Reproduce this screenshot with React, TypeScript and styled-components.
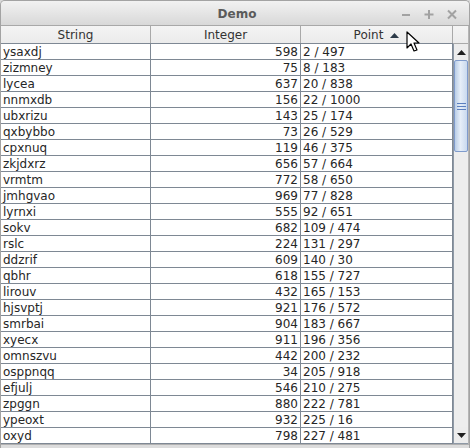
import React from "react";
import styled, { createGlobalStyle } from "styled-components";

const Global = createGlobalStyle`
  html, body { margin: 0; padding: 0; width: 470px; height: 448px; overflow: hidden; background: #d9d9d9; }
  #root { width: 470px; height: 448px; }
  * { box-sizing: border-box; }
`;

const rows: [string, number, string][] = [
  ["ysaxdj", 598, "2 / 497"],
  ["zizmney", 75, "8 / 183"],
  ["lycea", 637, "20 / 838"],
  ["nnmxdb", 156, "22 / 1000"],
  ["ubxrizu", 143, "25 / 174"],
  ["qxbybbo", 73, "26 / 529"],
  ["cpxnuq", 119, "46 / 375"],
  ["zkjdxrz", 656, "57 / 664"],
  ["vrmtm", 772, "58 / 650"],
  ["jmhgvao", 969, "77 / 828"],
  ["lyrnxi", 555, "92 / 651"],
  ["sokv", 682, "109 / 474"],
  ["rslc", 224, "131 / 297"],
  ["ddzrif", 609, "140 / 30"],
  ["qbhr", 618, "155 / 727"],
  ["lirouv", 432, "165 / 153"],
  ["hjsvptj", 921, "176 / 572"],
  ["smrbai", 904, "183 / 667"],
  ["xyecx", 911, "196 / 356"],
  ["omnszvu", 442, "200 / 232"],
  ["osppnqq", 34, "205 / 918"],
  ["efjulj", 546, "210 / 275"],
  ["zpggn", 880, "222 / 781"],
  ["ypeoxt", 932, "225 / 16"],
  ["oxyd", 798, "227 / 481"],
];

const Window = styled.div`
  position: relative;
  width: 470px;
  height: 448px;
  display: flex;
  flex-direction: column;
  border: 1px solid #a3a3a3;
  border-bottom: none;
  border-radius: 5px 5px 0 0;
  background: #d9d9d9;
  font-family: "DejaVu Sans", "Liberation Sans", sans-serif;
  overflow: hidden;
`;

const TitleBar = styled.div`
  height: 24px;
  flex: none;
  display: grid;
  grid-template-columns: 1fr auto 1fr;
  align-items: center;
  background: linear-gradient(#f2f2f2, #d8d8d8);
`;

const Title = styled.div`
  grid-column: 2;
  font-weight: bold;
  font-size: 12px;
  color: #5b5b5b;
  padding-left: 4px;
  padding-top: 2px;
`;

const TitleButtons = styled.div`
  grid-column: 3;
  justify-self: end;
  display: flex;
  gap: 11px;
  padding-right: 11px;
  padding-top: 1px;
`;

const TitleBtn = styled.svg`
  width: 12px;
  height: 12px;
  display: block;
`;

const Body = styled.div`
  flex: 1;
  display: flex;
  border-top: 1px solid #a8a8a8;
  min-height: 0;
`;

const TableArea = styled.div`
  width: 452px;
  display: flex;
  flex-direction: column;
  background: #ffffff;
`;

const HeaderRow = styled.div`
  display: grid;
  grid-template-columns: 150px 150px 152px;
  height: 18px;
  background: linear-gradient(#f4f4f4, #ebebeb);
  border-bottom: 1px solid #7e8894;
`;

const HeaderCell = styled.div`
  display: flex;
  align-items: center;
  justify-content: center;
  gap: 7px;
  font-size: 12px;
  color: #333333;
  border-right: 1px solid #a9a9a9;
  line-height: 16px;
  padding-top: 1px;
`;

const Row = styled.div`
  display: grid;
  grid-template-columns: 150px 150px 152px;
  height: 16px;
  border-bottom: 1px solid #7e8894;
`;

const Cell = styled.div<{ $align?: "left" | "right" }>`
  font-size: 12px;
  line-height: 16px;
  color: #262626;
  white-space: nowrap;
  overflow: hidden;
  text-align: ${(p) => p.$align ?? "left"};
  padding: 0 2px 0 2px;
  border-right: 1px solid #7e8894;
`;

const Scroll = styled.div`
  width: 16px;
  display: flex;
  flex-direction: column;
  background: #ededed;
  border-right: 1px solid #b5b5b5;
`;

const ScrollCorner = styled.div`
  height: 18px;
  flex: none;
  background: linear-gradient(#f4f4f4, #ebebeb);
  border-bottom: 1px solid #a9a9a9;
`;

const ScrollTrack = styled.div`
  flex: 1;
  display: flex;
  flex-direction: column;
  border-left: 1px solid #8e99a6;
  border-bottom: 1px solid #8e99a6;
`;

const ArrowBtn = styled.div`
  height: 16px;
  flex: none;
  display: flex;
  align-items: center;
  justify-content: center;
  background: #ececec;
`;

const Thumb = styled.div`
  height: 92px;
  flex: none;
  border: 1px solid #7f9bcc;
  border-radius: 2px;
  background: linear-gradient(90deg, #b9cde6, #e6eef8 45%, #c9d9ee);
  display: flex;
  flex-direction: column;
  align-items: center;
  justify-content: center;
  gap: 2px;
`;

const Grip = styled.div`
  width: 9px;
  height: 1px;
  background: #5b7fbf;
`;

const Spacer = styled.div`
  flex: 1;
`;

const BottomFrame = styled.div`
  height: 4px;
  flex: none;
  background: #dcdcdc;
  border-top: 1px solid #b0b0b0;
`;

const Cursor = styled.svg`
  position: absolute;
  left: 405px;
  top: 30px;
  width: 14px;
  height: 22px;
`;

const Up = () => (
  <svg width="9" height="5" viewBox="0 0 9 5">
    <path d="M0 5 L4.5 0 L9 5 Z" fill="#1e1e1e" />
  </svg>
);
const Down = () => (
  <svg width="9" height="5" viewBox="0 0 9 5">
    <path d="M0 0 L4.5 5 L9 0 Z" fill="#1e1e1e" />
  </svg>
);

export default function App() {
  return (
    <>
      <Global />
      <Window>
        <TitleBar>
          <Title>Demo</Title>
          <TitleButtons>
            <TitleBtn viewBox="0 0 12 12">
              <path d="M2 7 H10" stroke="#a2a2a2" strokeWidth="2" />
            </TitleBtn>
            <TitleBtn viewBox="0 0 12 12">
              <path d="M1.5 6.5 H10.5 M6 2 V11" stroke="#a2a2a2" strokeWidth="2" />
            </TitleBtn>
            <TitleBtn viewBox="0 0 12 12">
              <path d="M2 2.5 L10 10.5 M10 2.5 L2 10.5" stroke="#a2a2a2" strokeWidth="2" />
            </TitleBtn>
          </TitleButtons>
        </TitleBar>
        <Body>
          <TableArea>
            <HeaderRow>
              <HeaderCell>String</HeaderCell>
              <HeaderCell>Integer</HeaderCell>
              <HeaderCell>
                <span>Point</span>
                <svg width="9" height="5" viewBox="0 0 9 5">
                  <path d="M0 5 L4.5 0 L9 5 Z" fill="#2c3a48" />
                </svg>
              </HeaderCell>
            </HeaderRow>
            {rows.map(([s, n, p]) => (
              <Row key={s}>
                <Cell>{s}</Cell>
                <Cell $align="right">{n}</Cell>
                <Cell>{p}</Cell>
              </Row>
            ))}
          </TableArea>
          <Scroll>
            <ScrollCorner />
            <ScrollTrack>
              <ArrowBtn>
                <Up />
              </ArrowBtn>
              <Thumb>
                <Grip />
                <Grip />
                <Grip />
              </Thumb>
              <Spacer />
              <ArrowBtn>
                <Down />
              </ArrowBtn>
            </ScrollTrack>
          </Scroll>
        </Body>
        <BottomFrame />
        <Cursor viewBox="0 0 14 22">
          <path
            d="M1 1 L1 17 L5 13 L8 20 L11 19 L8 12 L13 12 Z"
            fill="#ffffff"
            stroke="#000000"
            strokeWidth="1.2"
            strokeLinejoin="round"
          />
        </Cursor>
      </Window>
    </>
  );
}
